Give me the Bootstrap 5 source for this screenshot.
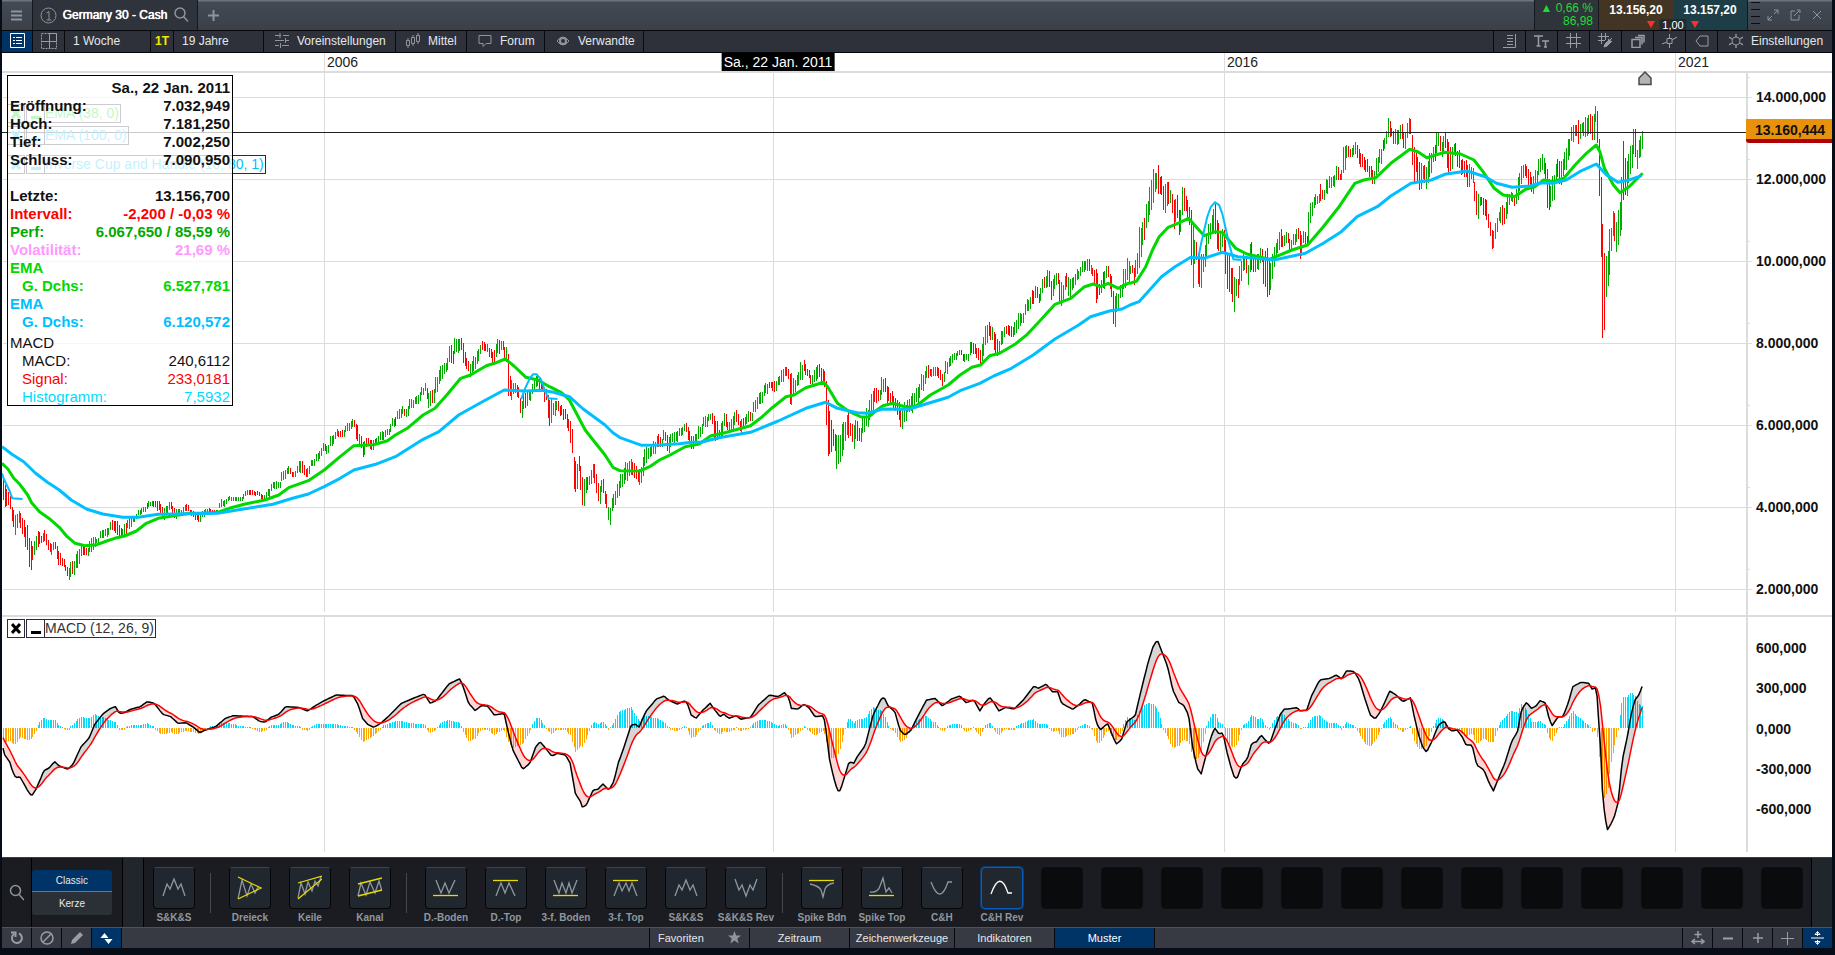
<!DOCTYPE html>
<html lang="de">
<head>
<meta charset="utf-8">
<meta name="viewport" content="width=device-width, initial-scale=1">
<title>Germany 30 - Cash</title>
<link href="https://cdn.jsdelivr.net/npm/bootstrap@5.3.0/dist/css/bootstrap.min.css" rel="stylesheet">
<style>
  body { height: 100vh; background: #070d16; padding: 0 3px 7px 2px; overflow: hidden;
    font: 12px/16px "Liberation Sans", Arial, sans-serif; color: #e4e8ec; }
  button { font: inherit; color: inherit; border: 0; border-radius: 0; background: none; padding: 0; white-space: nowrap; }
  svg { display: block; fill: none; stroke: currentColor; flex: none; }
  .firm { text-shadow: 0 0 0 currentColor, 0 0 1px currentColor; }
  .dim { color: #8f949a; }
  .edge { border-right: 1px solid #07090c; }

  .titlebar { height: 31px; background: linear-gradient(#6b737c 0, #6b737c 1px, #434a54 2px, #3b4048 100%); border-bottom: 1px solid #07090c; }
  .titlebar > * { border-right: 1px solid #15181d; }
  .titlebar > .bare { border-right: 0; }
  .menu-cell { width: 31px; padding-right: 2px; }
  .tab-cell { width: 165px; background: #2f333b; padding: 0 8px 0 7px; }
  .plus-cell { width: 31px; }
  .perf { width: 64px; background: #2f333a; color: #1fdc35; line-height: 13px; padding: 2px 5px 0 0; text-align: right; }
  .bid, .ask { width: 74px; padding-top: 2px; font-weight: 700; color: #fff; line-height: 17px; display: flex; justify-content: center; align-items: flex-start; }
  .bid { background: #433523; } .ask { background: #1d3e47; }
  .spread { position: absolute; bottom: 0; left: 50%; transform: translateX(-50%); width: 27px; height: 11px; background: #252930; line-height: 12px; text-align: center; font-size: 11px; border-radius: 2px 2px 0 0; color: #fff; }
  .tri { position: absolute; bottom: 2px; border: 4px solid transparent; border-top: 7px solid #ff2f2f; border-bottom: 0; }
  .tri-l { right: 18px; } .tri-r { left: 18px; }
  .grip { width: 14px; background: repeating-linear-gradient(transparent 0 6px, #0b0d10 6px 7px) 3px -4px / 9px 28px no-repeat; }
  .win-buttons { padding-right: 4px; }
  .win-buttons button { width: 22px; display: grid; place-items: center; }

  .toolbar { height: 22px; background: #2e3139; border-bottom: 1px solid #050608; }
  .toolbar button { border-right: 1px solid #07090c; display: flex; align-items: center; padding-bottom: 2px; }
  .toolbar .w31 { width: 31px; justify-content: center; }
  .toolbar .w32 { width: 32px; justify-content: center; color: #9a9ea4; }
  .toolbar .lit, .bottombar .lit { background: #003366; color: #fff; }

  .chart { background: #fff; color: #222; display: grid; grid-template: 20px 542fr 2px 240fr / 1fr 86px; font-size: 14px; overflow: hidden; min-height: 0; }
  .dates { grid-column: 1 / 3; position: relative; border-bottom: 2px solid #dcdcdc; }
  .dates .span-plot { position: absolute; inset: 0 86px 0 0; }
  .year { position: absolute; top: 0; height: 18px; line-height: 19px; border-left: 1px solid #dcdcdc; padding-left: 2px; }
  .date-tip { position: absolute; top: 0; height: 18px; line-height: 18px; background: #000; color: #fff; padding: 0 2px; transform: translateX(-50%); white-space: nowrap; }
  .plot { position: relative; min-height: 0; min-width: 0; }
  .plot > svg { position: absolute; inset: 0; width: 100%; height: 100%; }
  .plot path, .plot line { vector-effect: non-scaling-stroke; }
  .divider { grid-column: 1 / 3; background: #dcdcdc; }
  .scale { position: relative; border-left: 2px solid #dcdcdc; margin: 0; display: flex; flex-direction: column; justify-content: space-between; list-style: none; font-weight: 700; color: #111; }
  .scale li { position: relative; height: 20px; line-height: 20px; padding-left: 8px; }
  .price-scale { padding: 14px 0 16px; }
  .price-scale li::before { content: ""; position: absolute; left: 0; top: 10px; width: 4px; height: 1px; background: #dcdcdc; }
  .price-scale li::after { content: ""; position: absolute; left: 0; top: -10px; width: 2px; height: 1px; background: #dcdcdc; }
  .macd-scale { padding: 21px 0 33px; margin-bottom: 5px; }
  .last-price { position: absolute; top: 46px; left: -2px; right: 0; background: #e8920c; border-bottom: 4px solid #b00000; height: 24px; line-height: 22px; padding-left: 9px; border-radius: 0 0 0 3px; }
  .study { position: absolute; left: 5px; display: flex; line-height: 17px; white-space: nowrap; color: #333; }
  .study > * { border: 1px solid #2b2b3b; height: 19px; }
  .study button { width: 18px; margin-right: 1px; display: grid; place-items: center; color: var(--c, #000); }
  .study button + button { margin-right: 0; width: 19px; }
  .study span { border-left: 0; padding-right: 1px; color: var(--c, #333); }
  .s1 { top: 31px; --c: #00d800; } .s2 { top: 53px; --c: #00bfff; } .s3 { top: 82px; --c: #00bfff; } .s4 { top: 2px; }
  .marker { position: absolute; top: -2px; transform: translateX(-50%); }

  .readout { position: absolute; left: 5px; top: 2px; width: 226px; height: 331px; border: 1px solid #000; background: rgba(255,255,255,.76); font-size: 15px; font-weight: 700; color: #111; padding: 3px 2px 0; }
  .readout table { width: 100%; table-layout: fixed; border-collapse: collapse; }
  .readout col:last-child { width: 136px; }
  .readout th, .readout td { height: 18px; padding: 0; line-height: 18px; font-weight: inherit; white-space: nowrap; }
  .readout td { text-align: right; }
  .readout .sub th { padding-left: 12px; }
  .readout .thin { font-weight: 400; }
  .readout .thin.first th { height: 21px; padding-top: 3px; }

  .patterns { height: 70px; background: #1a1c21; border-top: 1px solid #3a3d43; }
  .find-cell { width: 30px; border-right: 1px solid #000; }
  .class-cell { width: 91px; border-right: 1px solid #000; padding: 12px 10px 0 0; font-size: 10px; }
  .class-cell button { display: block; width: 100%; height: 23px; background: #2b3037; border-radius: 0 0 3px 3px; }
  .class-cell button:first-child { height: 22px; background: #003366; border-bottom: 1px solid #6a7682; border-radius: 3px 3px 0 0; }
  .stripe { width: 21px; background: #21252c; border-right: 1px solid #000; }
  .stripe-end { width: 21px; background: #21252c; border-left: 1px solid #000; }
  .tiles { overflow: hidden; padding-top: 9px; }
  .tile { width: 60px; flex: none; display: flex; flex-direction: column; align-items: center; color: #8f979f; font-size: 10px; font-weight: 700; line-height: 14px; }
  .tile i { width: 42px; height: 42px; margin-bottom: 2px; border: 1px solid #050608; border-top-color: #3f444b; border-radius: 4px; background: #21272f; display: grid; place-items: center; }
  .tile.sel i { border: 1px solid #0a5db8; background: #21272f; color: #fff; box-shadow: 0 0 0 1px #0a3d78; }
  .tile.void i { background: #0a0b0d; border-color: #0d0e10; }
  .rule { width: 1px; margin: 6px 9px 0 6px; height: 40px; background: #45494f; flex: none; }

  .bottombar { height: 21px; background: #373a42; border-top: 1px solid #4f5257; font-size: 11px; }
  .bottombar button { border-right: 1px solid #07090c; }
  .bottombar .sq { width: 30px; display: grid; place-items: center; color: #9a9ea4; }
  .bottombar .sq.lit { color: #fff; }
  .bottombar .sq-r { border-right: 0; border-left: 1px solid #07090c; }
  .bottombar .pane { width: 100px; padding-bottom: 1px; }
  .bottombar .pane.wide { width: 105px; }
</style>
</head>
<body class="d-flex flex-column m-0">

<header class="titlebar d-flex">
  <button class="menu-cell dim d-grid justify-content-center align-content-center" aria-label="Menü"><svg width="11" height="11" stroke-width="2"><path d="M0 1.5h11M0 5.5h11M0 9.5h11"/></svg></button>
  <div class="tab-cell d-flex align-items-center justify-content-between">
    <svg class="dim" width="17" height="17"><circle cx="8.500" cy="8.500" r="7.500"/><path d="M6.500 6l2.500-1.500v8.500M6.500 13h5"/></svg>
    <span class="firm text-white">Germany 30 - Cash</span>
    <svg class="dim" width="16" height="16" stroke-width="1.500"><circle cx="7" cy="6" r="5"/><path d="M10.500 9.500l4.500 5"/></svg>
  </div>
  <button class="plus-cell bare dim d-grid justify-content-center align-content-center" aria-label="Neuer Tab"><svg width="11" height="11" stroke-width="2"><path d="M5.500 0v11M0 5.500h11"/></svg></button>
  <div class="flex-grow-1"></div>
  <div class="perf"><div>▲ 0,66 %</div><div>86,98</div></div>
  <div class="d-flex position-relative">
    <button class="bid position-relative">13.156,20<span class="tri tri-l"></span></button>
    <button class="ask position-relative">13.157,20<span class="tri tri-r"></span></button>
    <span class="spread">1,00</span>
  </div>
  <div class="grip bare"></div>
  <div class="win-buttons bare d-flex dim">
    <button aria-label="Vergrößern"><svg width="12" height="12"><path d="M1 7v4h4M1 11l4-4M7 1h4v4M11 1L7 5"/></svg></button>
    <button aria-label="Abdocken"><svg width="12" height="12"><path d="M6 2H2v9h8V6M5 7l5-5M8 1h3v3"/></svg></button>
    <button aria-label="Schließen"><svg width="10" height="10"><path d="M1 1l8 8M9 1L1 9"/></svg></button>
  </div>
</header>

<nav class="toolbar d-flex firm">
  <button class="w31 lit" aria-label="Liste"><svg width="15" height="15"><path d="M.5.5h14v14H.5zM3 4.500h2M6 4.500h6M3 7.500h2M6 7.500h6M3 10.500h2M6 10.500h6"/></svg></button>
  <button class="w32" aria-label="Raster"><svg width="16" height="16"><path d="M.5.5h15v15H.5z" stroke-dasharray="2 1"/><path d="M8.500 8.500v7M.5 8.500h8M8.500.5h7v8h-7z"/></svg></button>
  <button style="width:86px" class="ps-2">1 Woche</button>
  <button style="width:23px" class="justify-content-center"><b style="color:#f4ea00">1T</b></button>
  <button style="width:90px" class="ps-2">19 Jahre</button>
  <button style="width:132px;padding-left:11px" class="gap-2"><svg class="dim" width="14" height="15"><path d="M0 2.500h6M8 2.500h6M5 0v5M0 7.500h9M11 7.500h3M10.500 5v5M0 12.500h4M7 12.500h7M5.500 10v5"/></svg>Voreinstellungen</button>
  <button style="width:71px;padding-left:10px" class="gap-2"><svg class="dim" width="14" height="15"><path d="M.5 7.500h3v5h-3zM5.500 4.500h3v6h-3zM10.500 2.500h3v6h-3zM2 5v2M2 12v3M7 2v2M7 11v2M12 0v2M12 9v2"/></svg>Mittel</button>
  <button style="width:78px;padding-left:11px" class="gap-2"><svg class="dim" width="14" height="14"><path d="M1 1.500h12v8H8l-3 3v-3H1z"/></svg>Forum</button>
  <button style="width:99px;padding-left:11px" class="gap-2"><svg class="dim" width="14" height="14"><path d="M1 7q6-8 12 0q-6 8-12 0z"/><circle cx="7" cy="7" r="3" stroke-width="2"/></svg>Verwandte</button>
  <div class="flex-grow-1 edge"></div>
  <button class="w32" aria-label="Skala"><svg width="14" height="14"><path d="M4 1.500h6M4 4.500h6M4 7.500h6M4 10.500h6M12.500 0v13.500H0"/></svg></button>
  <button class="w32" aria-label="Schriftgröße"><svg width="15" height="14" stroke-width="1.500"><path d="M0 2h9M4.500 2v10M2.500 12h4M8 7h7M11.500 7v6M10 13h3"/></svg></button>
  <button class="w32" aria-label="Gitter"><svg width="15" height="15"><path d="M4.500 0v15M10.500 0v15M0 4.500h15M0 10.500h15"/></svg></button>
  <button class="w32" aria-label="Gitterfarbe"><svg width="15" height="15"><path d="M3.500 0v11M7.500 0v7M0 3.500h11M0 7.500h7"/><path d="M6 14l1-3 4-4 2 2-4 4zM10 6l4 3M12 7l2-2" fill="currentColor"/></svg></button>
  <button class="w32" aria-label="Ebenen"><svg width="14" height="14"><path d="M1 5.500h8v8H1zM4 3.500h7v7M7 1.500h6v7" stroke-width="1.500"/></svg></button>
  <button class="w32" aria-label="Kurs"><svg width="15" height="14"><path d="M0 10l5-2M10 6l5-3M7.500 0v4M7.500 10v4M5 4.500h5v5H5z"/></svg></button>
  <button class="w32" aria-label="Etikett"><svg width="14" height="12"><path d="M1 6l4-5h8v10H5z"/></svg></button>
  <button style="padding-left:11px;width:114px" class="gap-2 border-0"><svg class="dim" width="14" height="14"><circle cx="7" cy="7" r="4"/><path d="M7 0v3M7 11v3M0 3l3 2M14 3l-3 2M0 11l3-2M14 11l-3-2" stroke-width="1.500"/></svg>Einstellungen</button>
</nav>

<main class="chart flex-grow-1">
  <div class="dates"><div class="span-plot" id="years"></div></div>

  <section class="plot" aria-label="Kurs">
    <svg id="price" viewBox="2 73 1744 542" preserveAspectRatio="none"></svg>
    <div class="study s1"><button aria-label="Schließen"><svg width="11" height="11" stroke-width="3"><path d="M1 1l8 9M9 1L1 10"/></svg></button><button aria-label="Minimieren"><svg width="11" height="11" stroke-width="3"><path d="M1 9.500h10"/></svg></button><span>EMA (38, 0)</span></div>
    <div class="study s2"><button aria-label="Schließen"><svg width="11" height="11" stroke-width="3"><path d="M1 1l8 9M9 1L1 10"/></svg></button><button aria-label="Minimieren"><svg width="11" height="11" stroke-width="3"><path d="M1 9.500h10"/></svg></button><span>EMA (100, 0)</span></div>
    <div class="study s3"><button aria-label="Schließen"><svg width="11" height="11" stroke-width="3"><path d="M1 1l8 9M9 1L1 10"/></svg></button><button aria-label="Minimieren"><svg width="11" height="11" stroke-width="3"><path d="M1 9.500h10"/></svg></button><span>Inverse Cup and Handle (10, 80, 1)</span></div>
    <div class="marker" id="marker"><svg width="15" height="15"><path d="M7.500 1L13.500 7v6.500h-12V7z" fill="#b4b4b4" stroke="#4a4a4a" stroke-width="1.500"/></svg></div>
    <div class="readout">
      <table>
        <colgroup><col><col></colgroup>
        <tr><td colspan="2">Sa., 22 Jan. 2011</td></tr>
        <tr><th>Eröffnung:</th><td>7.032,949</td></tr>
        <tr><th>Hoch:</th><td>7.181,250</td></tr>
        <tr><th>Tief:</th><td>7.002,250</td></tr>
        <tr><th>Schluss:</th><td>7.090,950</td></tr>
        <tr><td colspan="2"></td></tr>
        <tr><th>Letzte:</th><td>13.156,700</td></tr>
        <tr style="color:#f00"><th>Intervall:</th><td>-2,200 / -0,03 %</td></tr>
        <tr style="color:#00aa00"><th>Perf:</th><td>6.067,650 / 85,59 %</td></tr>
        <tr style="color:#ff99ff"><th>Volatilität:</th><td>21,69 %</td></tr>
        <tr style="color:#00d800"><th colspan="2">EMA</th></tr>
        <tr style="color:#00d800" class="sub"><th>G. Dchs:</th><td>6.527,781</td></tr>
        <tr style="color:#00bfff"><th colspan="2">EMA</th></tr>
        <tr style="color:#00bfff" class="sub"><th>G. Dchs:</th><td>6.120,572</td></tr>
        <tr class="thin first"><th colspan="2">MACD</th></tr>
        <tr class="thin sub"><th>MACD:</th><td>240,6112</td></tr>
        <tr class="thin sub" style="color:#f00"><th>Signal:</th><td>233,0181</td></tr>
        <tr class="thin sub" style="color:#00dcff"><th>Histogramm:</th><td>7,5932</td></tr>
      </table>
    </div>
  </section>
  <ul class="scale price-scale">
    <li>14.000,000</li><li>12.000,000</li><li>10.000,000</li><li>8.000,000</li><li>6.000,000</li><li>4.000,000</li><li>2.000,000</li>
    <div class="last-price">13.160,444</div>
  </ul>

  <div class="divider"></div>

  <section class="plot" aria-label="MACD">
    <svg id="macd" viewBox="2 617 1744 240" preserveAspectRatio="none"></svg>
    <div class="study s4"><button aria-label="Schließen"><svg width="11" height="11" stroke-width="3"><path d="M1 1l8 9M9 1L1 10"/></svg></button><button aria-label="Minimieren"><svg width="11" height="11" stroke-width="3"><path d="M1 9.500h10"/></svg></button><span>MACD (12, 26, 9)</span></div>
  </section>
  <ul class="scale macd-scale">
    <li>600,000</li><li>300,000</li><li>0,000</li><li>-300,000</li><li>-600,000</li>
  </ul>
</main>

<section class="patterns d-flex">
  <button class="find-cell dim d-grid justify-content-center align-content-center" aria-label="Suchen"><svg width="16" height="17" stroke-width="1.500"><circle cx="7.500" cy="6.500" r="5"/><path d="M11 10.500l5 5.500"/></svg></button>
  <div class="class-cell firm"><button>Classic</button><button>Kerze</button></div>
  <div class="stripe"></div>
  <div class="tiles d-flex flex-grow-1" id="tiles"></div>
  <div class="stripe-end"></div>
</section>

<footer class="bottombar d-flex firm">
  <button class="sq" aria-label="Zurücksetzen"><svg width="14" height="14" stroke-width="2"><path d="M9 2.500A5 5 0 1 1 4 3M1 1.500h4.500V6"/></svg></button>
  <button class="sq" aria-label="Ausblenden"><svg width="14" height="14" stroke-width="1.500"><circle cx="7" cy="7" r="6"/><path d="M3 11l8-8"/></svg></button>
  <button class="sq" aria-label="Zeichnen"><svg width="14" height="14"><path d="M1 13l1-4L10 1l3 3-8 8z" fill="currentColor" stroke="none"/></svg></button>
  <button class="sq lit" aria-label="Muster"><svg width="13" height="13"><path d="M4.500 1l4 5h-8zM8.500 12l4-5h-8z" fill="currentColor" stroke="none"/></svg></button>
  <div class="flex-fill edge" style="flex-basis:0"></div>
  <button class="pane d-flex align-items-center justify-content-between px-2">Favoriten<svg class="dim" width="13" height="13"><path d="M6.500 0l1.700 4.500H13L9.300 7.500l1.400 5-4.200-3-4.200 3 1.400-5L0 4.500h4.800z" fill="currentColor" stroke="none"/></svg></button>
  <button class="pane">Zeitraum</button>
  <button class="pane wide">Zeichenwerkzeuge</button>
  <button class="pane">Indikatoren</button>
  <button class="pane lit">Muster</button>
  <div class="flex-fill" style="flex-basis:0"></div>
  <button class="sq sq-r" aria-label="Strecken"><svg width="14" height="14" stroke-width="1.500"><path d="M7 0v7M3.500 3.500h7M1 10.500h12M4 8l-3 2.500L4 13M10 8l3 2.500-3 2.500"/></svg></button>
  <button class="sq sq-r" aria-label="Verkleinern"><svg width="10" height="3"><path d="M0 1.500h10" stroke-width="2"/></svg></button>
  <button class="sq sq-r" aria-label="Vergrößern"><svg width="10" height="10" stroke-width="1.500"><path d="M5 0v10M0 5h10"/></svg></button>
  <button class="sq sq-r" aria-label="Fadenkreuz"><svg width="13" height="13"><path d="M6.500 0v13M0 6.500h13"/></svg></button>
  <button class="sq sq-r lit" aria-label="Höhe"><svg width="13" height="14"><path d="M0 7h13M6.500 1v4M6.500 9v4M4 3.500l2.500-3 2.500 3zM4 10.500l2.500 3 2.500-3z"/></svg></button>
</footer>

<script src="https://cdn.jsdelivr.net/npm/bootstrap@5.3.0/dist/js/bootstrap.bundle.min.js"></script>
<script>
// A run is [x origin, y origin, x units per step, "x,y[,y2] ..."]; y units are thirds.
const decode = runs => runs.flatMap(([x0, y0, k, s]) => s.trim().split(/\s+/).map(p => {
  const v = p.split(',').map(Number);
  return [x0 + v[0] / k, ...v.slice(1).map(y => y0 + y / 3)];
}));
const K = 2.529, R = 2.224, WEEK = 1.729;

const range = decode([[0, 320, K, `5,460,520 10,500,565 22,515,555 30,560,605 38,580,640 47,573,613 57,595,640 65,620,685 77,655,742 82,680,720 90,650,688 95,633,680 105,645,670 112,628,662 122,660,690 130,675,703 138,665,685 148,690,738 158,715,738 165,735,752 173,745,782 178,725,768 186,720,762 195,695,740 208,675,708 220,682,708 227,665,698 234,648,690 245,655,670 255,632,655 270,625,648 283,603,628 292,605,640 300,610,655 308,625,650 318,610,640 325,597,625 340,590,605 350,570,585 365,560,575 375,543,560 388,543,560 400,543,572 412,560,598 420,558,580 430,547,568 442,565,595 455,568,582 470,552,570 485,570,588 495,578,600 502,582,608 512,572,590 525,565,580 545,570,582 560,540,560 585,530,540 605,530,540 628,510,525 650,515,525 665,525,540 680,505,530 690,485,505 705,485,505 715,452,480 730,440,462 740,455,470 760,425,455 776,445,470 790,418,440 805,395,420 820,370,395 828,375,400 835,347,380 855,330,350 865,330,350 880,310,332 893,298,320 900,312,360 912,345,380 918,365,408 930,352,378 940,362,392 950,355,375 965,335,362 980,325,345 995,295,320 1010,268,295 1018,260,285 1025,265,290 1040,238,262 1055,225,250 1070,200,225 1075,190,215 1083,215,262 1095,208,250 1103,175,220 1115,135,180 1127,130,155 1138,75,130 1145,95,130 1150,58,100 1165,55,90 1170,75,125 1180,115,145 1188,130,168 1200,110,150 1210,85,125 1218,63,90 1228,70,95 1240,85,115 1248,95,135 1258,60,100 1270,60,90 1278,80,115 1284,110,220 1292,185,235 1302,185,220 1310,200,235 1318,240,292 1326,215,262 1340,210,240 1350,180,210 1357,165,200 1368,180,210 1378,205,245 1390,240,312 1400,245,285 1410,240,270 1418,255,285 1428,265,300 1437,295,335 1447,320,400 1452,400,515 1457,435,520 1463,405,455 1468,430,515 1475,480,557 1482,470,520 1490,465,495 1500,428,475 1507,455,515 1515,500,550 1523,480,520 1533,520,565 1541,565,612 1548,535,575 1555,510,555 1563,485,530`],
[620, 240, K, `3,700,745 15,670,722 27,660,700 35,670,710 45,690,730 52,680,735 57,648,705 65,622,668 75,620,650 85,605,640 95,585,620 105,595,620 112,573,600 122,590,638 132,578,605 140,575,605 155,560,585 165,550,575 172,558,600 180,590,630 190,580,620 200,558,595 215,530,560 228,520,540 232,518,550 237,530,600 243,540,600 250,570,600 256,545,590 265,518,560 275,545,570 285,530,570 293,510,545 305,540,575 315,530,555 325,515,545 332,520,540 340,480,515 355,455,490 370,430,460 380,425,445 390,425,455 400,410,435 410,390,425 417,378,405 425,390,420 431,405,500 440,415,460 450,400,435 458,370,425 464,360,395 473,385,410 485,405,430 495,380,425 502,370,410 510,388,425 517,392,440 521,430,560 527,490,635 533,540,630 540,570,620 547,590,682 555,590,665 562,550,640 568,548,605 575,520,590 583,545,590 590,550,630 597,538,600 607,565,602 615,530,580 625,505,560 635,460,520 645,440,485 655,450,480 660,410,460 668,415,455 675,435,485 685,455,490 695,470,515 705,490,540 712,510,568 720,490,545 730,480,515 740,458,515 750,445,490 765,405,450 775,375,415 785,385,410 797,380,405 806,385,415 814,400,438 825,365,400 835,350,378 845,338,360 860,328,345 868,340,365 878,340,362 887,303,340 895,310,340 903,325,355 911,335,375 918,295,350 925,255,310 932,245,290 940,262,300 950,280,350 957,300,340 965,270,310 975,255,285 990,258,290 1000,250,285 1005,218,270 1015,220,250 1030,180,215 1045,150,190 1052,138,175 1060,160,190 1067,118,160 1075,110,140 1083,90,140 1090,125,178 1098,102,150 1106,100,130 1114,125,195 1120,130,180 1127,98,145 1137,115,175 1145,110,145 1158,90,120 1170,62,95 1185,60,90 1195,85,110 1204,95,195 1212,130,165 1222,95,145 1233,78,115 1242,110,170 1250,160,265 1258,160,210 1268,130,170 1275,90,145 1283,55,125`],
[1130, 90, R, `3,525,550 10,530,585 14,495,550 20,415,530 28,400,460 36,345,410 44,290,370 50,243,330 57,250,300 62,222,305 68,260,310 76,280,365 84,282,345 90,295,345 97,330,410 103,320,385 110,365,430 117,295,370 125,315,365 131,350,410 135,370,510 137,400,595 146,455,510 152,480,590 156,500,597 163,490,550 170,435,505 176,395,450 182,375,430 189,340,425 194,395,480 200,415,490 206,410,470 212,440,545 218,490,600 225,530,610 231,560,670 237,570,620 244,525,590 250,495,545 256,500,540 262,520,580 268,460,535 276,500,545 283,490,540 291,475,515 297,500,580 305,480,612 312,520,600 320,475,525 328,445,490 334,420,470 340,435,470 348,425,460 356,450,480 365,430,465 373,415,450 379,430,510 386,425,460 394,435,465 396,365,450 404,335,375 412,312,345 418,315,340 423,285,330 430,300,330 437,270,310 446,260,295 453,255,290 459,225,270 467,250,272 475,175,245 482,165,205 492,175,200 501,155,190 508,180,225 515,190,235 525,210,245 534,228,262 542,240,285 548,200,250 556,175,220 566,140,175 575,85,145 580,110,140 588,120,165 596,118,160 603,105,145 610,125,175 617,95,140 622,75,125 626,110,160 629,170,300 634,190,245 640,200,270 644,215,300 651,230,270 658,230,300 666,195,260 675,170,215 682,135,190 686,125,170 692,155,200 700,128,180 707,160,245 714,175,240 722,160,195 730,185,235 738,210,255 746,215,260 752,225,285 760,230,270 766,270,340 772,315,380 780,320,345 788,330,380 794,330,390 799,395,440 806,425,480 812,400,450 820,365,395 827,345,400 832,350,400 838,315,370 847,305,330 855,320,350 862,265,330 870,230,280 877,220,255 886,240,285 894,255,310 902,240,280 910,205,250 917,195,240 923,215,270 928,245,345 934,290,355 941,255,330 950,210,265 958,215,285 966,190,245 975,150,205 982,108,155 990,105,135 997,95,160 1004,100,130 1013,85,140 1022,72,130 1029,75,150 1037,45,95 1041,85,240 1044,150,340 1048,250,520 1051,400,762 1055,500,738 1060,510,600 1065,420,560 1070,410,480 1075,355,430 1081,400,490 1087,360,455 1092,270,410 1096,165,320 1102,210,320 1108,195,285 1115,160,230 1122,110,190 1126,180,240 1133,150,210 1137,130,185 1141,120,175`]]);

const ema38 = decode([[0, 320, K, `5,430 20,447 35,475 50,493 70,525 80,548 100,575 125,596 150,622 170,650 190,670 215,677 245,674 270,663 290,655 315,648 345,633 370,610 400,595 440,587 480,580 510,580 550,577 580,565 620,552 670,540 705,525 730,503 780,482 820,450 860,410 895,377 945,374 980,362 1000,345 1030,325 1070,285 1100,265 1130,225 1165,175 1190,165 1230,137 1250,130 1278,117 1300,138 1330,172 1360,180 1390,200 1420,218 1440,240 1460,285 1480,330 1500,360 1530,405 1550,442 1566,451`],
[620, 240, K, `0,692 50,693 75,680 100,660 130,643 165,620 200,612 230,587 265,578 300,567 330,557 360,530 385,503 420,470 440,465 470,443 515,427 525,440 550,490 580,515 610,531 630,530 650,510 665,497 690,490 725,502 750,497 785,465 830,435 860,405 890,382 912,375 935,347 960,340 1000,312 1030,283 1060,245 1100,193 1140,175 1175,140 1197,132 1215,140 1235,130 1260,145 1285,130`],
[1130, 90, R, `0,580 15,573 35,530 50,480 65,440 85,412 110,398 130,385 150,415 165,437 190,425 205,427 235,475 260,492 310,508 330,497 360,480 395,465 430,410 465,350 500,280 520,270 547,263 580,220 605,195 622,178 640,185 660,203 700,187 735,192 765,210 785,245 810,295 830,315 855,320 880,298 900,290 920,270 940,275 965,265 990,225 1015,190 1037,165 1045,185 1055,235 1075,285 1090,308 1110,290 1140,250`]]);

const ema100 = decode([[0, 320, K, `5,380 30,403 60,425 90,460 120,487 150,510 180,540 220,568 260,582 310,592 350,592 400,583 550,580 600,570 690,553 740,535 780,522 820,500 860,475 895,450 950,433 1000,410 1070,358 1110,335 1160,285 1220,245 1275,210 1330,213 1370,211 1400,217 1440,230 1475,267 1530,315 1550,338 1566,351`],
[620, 240, K, `0,593 55,616 100,615 150,611 180,607 205,607 250,593 330,577 400,543 470,505 520,487 550,505 600,518 625,520 665,507 730,508 780,490 830,472 860,452 910,430 945,408 990,385 1045,345 1100,297 1160,255 1190,230 1240,212 1270,207`],
[1130, 90, R, `0,645 20,635 40,605 70,560 100,530 135,502 165,505 205,487 240,500 320,510 390,490 430,460 470,425 505,380 550,350 580,318 625,280 670,270 700,253 750,243 790,260 815,280 850,292 890,288 915,278 940,280 970,270 1000,245 1037,222 1060,255 1085,277 1110,270 1138,257`]]);

const cups = [
  decode([[0, 320, K, '5,460 10,478 24,512 31,535 57,537']]),
  decode([[0, 320, K, '1318,238 1328,205 1340,175 1348,163 1357,163 1368,178 1378,212 1387,235 1410,237']]),
  decode([[1130, 90, R, '152,505 158,462 165,420 172,380 180,350 189,337 198,345 205,370 212,410 220,460 230,508 248,510']])];

const macd = decode([[0, 600, K, `5,432 12,465 25,487 32,515 40,533 50,530 60,550 70,572 80,588 90,570 105,530 110,513 125,503 138,485 150,498 172,508 185,492 205,440 225,415 240,372 260,342 280,325 292,320 302,340 315,338 330,328 355,320 372,305 390,310 412,343 432,350 450,370 470,368 490,382 505,398 520,390 545,380 570,355 590,347 640,350 655,363 670,367 685,352 705,343 722,320 755,322 778,333 800,315 820,302 850,285 893,287 905,312 917,355 930,373 945,382 960,372 980,352 1015,310 1045,295 1073,282 1088,310 1103,302 1135,252 1163,236 1172,262 1185,310 1202,332 1217,317 1233,318 1250,345 1275,340 1285,395 1297,450 1310,480 1322,508 1340,490 1355,440 1366,425 1380,445 1395,468 1410,460 1430,465 1442,490 1455,580 1468,605 1473,622 1483,615 1500,570 1512,568 1525,552 1540,570 1552,545 1566,478`],
[620, 600, K, `0,475 12,435 28,375 40,373 48,382 65,335 92,297 112,288 122,300 145,312 165,302 172,315 180,345 192,355 210,330 228,310 240,330 253,350 262,342 275,355 295,347 305,358 330,352 350,315 378,285 400,290 416,278 427,293 433,325 450,327 465,313 478,323 493,350 515,347 522,400 530,480 540,530 550,572 557,572 568,530 578,490 585,485 590,492 600,470 620,437 640,345 660,298 668,292 678,317 695,335 708,390 720,405 735,392 755,345 775,300 797,295 815,318 838,297 860,288 875,308 895,300 910,333 922,310 935,292 947,310 958,333 975,322 997,327 1020,300 1047,258 1058,265 1078,252 1093,275 1107,275 1117,310 1145,328 1160,315 1175,298 1195,310 1205,370 1215,390 1233,370 1245,405 1255,432 1268,420 1282,365 1303,347 1315,285 1335,190 1348,140 1359,120 1372,160 1385,200 1398,270 1413,307 1425,315 1438,345 1448,440 1460,505 1470,522 1480,475 1495,410 1503,387`],
[1215, 600, K, `0,385 10,402 20,398 30,455 40,500 50,535 57,532 68,495 82,475 93,430 105,425 117,405 127,420 138,432 152,385 165,343 175,328 208,323 215,333 232,330 245,285 265,240 290,235 307,225 320,237 333,212 352,215 365,240 380,300 393,345 405,357 418,335 430,305 442,273 458,285 475,305 495,293 502,340 515,405 525,440 535,457 550,420 565,375 580,363 590,385 600,393 612,390 625,410 635,435 650,435 662,495 680,510 692,545 704,573 715,540 733,490 750,425 765,395 775,330 788,307 800,325 812,318 822,302 835,308 845,355 852,378 868,350 880,350 893,310 905,260 925,247 947,250 952,268 965,262 970,360 975,440 980,580 985,640 992,690 1000,675 1010,650 1020,605 1030,480 1043,410 1052,345 1062,300 1072,285 1081,257`]]);

// Linear interpolation; a sharpness above 1 holds each anchor longer and keeps its extremes.
let cursor;
const at = (pts, x, sharp = 1) => {
  let i = 1;
  while (i < pts.length - 1 && pts[i][0] < x) i++;
  cursor = i;
  const a = pts[i - 1], b = pts[i];
  let t = (x - a[0]) / (b[0] - a[0]);
  t = Math.min(1, Math.max(0, (t - .5) * sharp + .5));
  return a.map((v, n) => v + (b[n] - v) * t);
};
const poly = pts => 'M' + pts.map(p => p[0].toFixed(1) + ' ' + p[1].toFixed(1)).join('L');
let seed = 7;
const rnd = () => (seed = (seed * 16807) % 2147483647) / 2147483647;

// Price panel
const YEARS = [[324, '2006'], [773, ''], [1224, '2016'], [1675, '2021']];
let up = '', down = '';
for (let x = 3; x <= 1643; x += WEEK) {
  const [, hi, lo] = at(range, x, 2.500), i = cursor;
  const slope = range[i][1] + range[i][2] - range[i - 1][1] - range[i - 1][2];
  const span = lo - hi, top = hi + (rnd() - .5) * span * .2, bot = lo - (rnd() - .5) * span * .2;
  const seg = `M${Math.round(x) + .5} ${top.toFixed(1)}V${Math.max(bot, top + 4).toFixed(1)}`;
  if ((slope <= 0) !== (rnd() < .03)) up += seg; else down += seg;
}
const grid = YEARS.map(([x]) => `M${x + .5} 73V612`).join('') + [97, 179, 261, 343, 425, 507, 589].map(y => `M3 ${y + .5}H1746`).join('');
price.innerHTML = `<path d="${grid}" stroke="#dcdcdc"/><g shape-rendering="crispEdges"><path d="${up}" stroke="#00aa00"/><path d="${down}" stroke="#ff0000"/></g>
<path d="${poly(ema38)}" stroke="#00d800" stroke-width="3" stroke-linejoin="round"/>
<path d="${poly(ema100)}" stroke="#00bfff" stroke-width="3" stroke-linejoin="round"/>
${cups.map(c => `<path d="${poly(c)}" stroke="#00bfff" stroke-width="2"/>`).join('')}
<path d="M2 132.5H1746" stroke="#222"/>`;

// MACD panel: signal is the exponential average of the MACD line
const ZERO = 728, line = [], sig = [];
let s = 735;
for (let x = 3; x <= 1643; x += WEEK) {
  const y = at(macd, x)[1];
  s += (y - s) * .2;
  line.push([x, y]); sig.push([x, s]);
}
let pos = '', neg = '', above = '', below = '';
line.forEach(([x, y], i) => {
  const d = y - sig[i][1], bar = `M${Math.round(x) + .5} ${ZERO}V${(ZERO + d + (d < 0 ? -1 : 1)).toFixed(1)}`;
  if (d < 0) pos += bar; else neg += bar;
  if (i) {
    const q = `M${line[i - 1]}L${x} ${y}L${sig[i]}L${sig[i - 1]}Z`;
    if (d < 0) above += q; else below += q;
  }
});
document.getElementById('macd').innerHTML = `<path d="${YEARS.map(([x]) => `M${x + .5} 617V852`).join('')}" stroke="#dcdcdc"/>
<g shape-rendering="crispEdges"><path d="${pos}" stroke="#00dcff"/><path d="${neg}" stroke="#ffa500"/>
<path d="${above}" fill="rgba(0,0,0,.16)" stroke="none"/><path d="${below}" fill="rgba(255,0,0,.16)" stroke="none"/></g>
<path d="${poly(line)}" stroke="#000" stroke-width="1.500" stroke-linejoin="round"/><path d="${poly(sig)}" stroke="#f00" stroke-width="1.500" stroke-linejoin="round"/>`;

const pct = x => ((x - 2) / 1744 * 100).toFixed(3) + '%';
years.innerHTML = YEARS.map(([x, t]) => `<span class="year" style="left:${pct(x)}">${t}</span>`).join('') +
  `<span class="date-tip" style="left:${pct(778)}">Sa., 22 Jan. 2011</span>`;
marker.style.left = pct(1645);

// Pattern tiles: [label, grey stroke, yellow stroke]; null is a group rule
const T = [
  ['S&K&S', 'M2 22l4-12 3 5 4-10 4 10 3-5 4 12'], null,
  ['Dreieck', 'M1 25L5 6l5 16 4-12 4 9 3-6', 'M1 3l23 11L1 25'],
  ['Keile', 'M1 24L4 9l4 11 3-12 4 9 3-10 3 5 3-9', 'M1 9l24-7M1 25L25 5'],
  ['Kanal', 'M1 22L4 9l5 12 4-13 5 11 4-12 3 10', 'M1 10l24-6M1 22l24-6'], null,
  ['D.-Boden', 'M3 6l5 13 4-10 4 10 6-13', 'M0 21.500h25'],
  ['D.-Top', 'M3 22L8 9l4 10 4-10 6 13', 'M0 6.500h25'],
  ['3-f. Boden', 'M1 6l5 13 3-10 4 10 3-10 3 10 5-13', 'M0 21.500h25'],
  ['3-f. Top', 'M1 22L6 9l3 8 4-8 3 8 3-8 5 13', 'M0 6.500h25'],
  ['S&K&S', 'M2 22l4-11 3 5 4-10 4 10 3-5 4 11'],
  ['S&K&S Rev', 'M2 5l4 11 3-5 4 11 4-11 3 5 4-11'], null,
  ['Spike Bdn', 'M1 10q9 2 11 6l2 7 2-8q2-5 9-6', 'M0 6.500h25'],
  ['Spike Top', 'M1 18q8 1 10-6l3-8 3 14 3-4 3 5', 'M0 21.500h25'],
  ['C&H', 'M2 8q9 24 17 0h4'],
  ['C&H Rev', 'M2 20q9-25 17-1h4']];
tiles.innerHTML = T.map((t, i) => !t ? '<span class="rule"></span>' :
  `<button class="tile${i === T.length - 1 ? ' sel' : ''}"><i><svg width="25" height="28" stroke-width="1.300"><path d="${t[1]}"/>${t[2] ? `<path d="${t[2]}" stroke="#e6dc00"/>` : ''}</svg></i>${t[0].replace(/&/g, '&amp;')}</button>`).join('') +
  '<span class="tile void"><i></i></span>'.repeat(13);
</script>
</body>
</html>
